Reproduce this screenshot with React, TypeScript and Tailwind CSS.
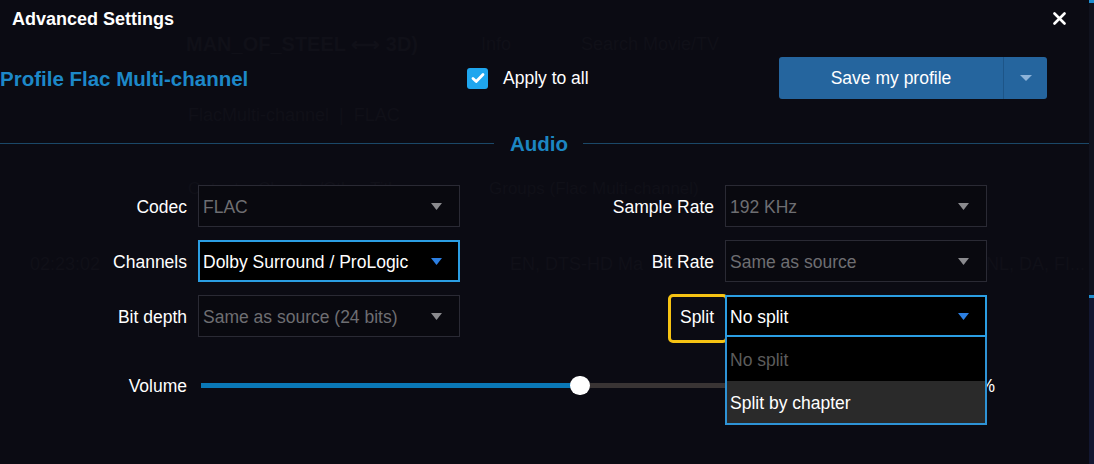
import React from "react";

function Caret({ color }: { color: string }) {
  return (
    <svg width="11" height="7" viewBox="0 0 11 7" className="shrink-0">
      <path d="M0 0h11L5.5 7z" fill={color} />
    </svg>
  );
}

function Select({ value, active = false }: { value: string; active?: boolean }) {
  return (
    <div
      className={
        active
          ? "flex h-[42px] w-[262px] items-center justify-between border-2 border-[#2b9ee3] bg-black pl-[3px] pr-[16px] text-white"
          : "flex h-[42px] w-[262px] items-center justify-between border border-[#2a2a34] bg-[#09090f] pl-[4px] pr-[17px] text-[#6e6e72]"
      }
    >
      <span className="whitespace-nowrap pt-[3px]">{value}</span>
      <Caret color={active ? "#2c7fe2" : "#8a8a8e"} />
    </div>
  );
}

function Label({ text, w }: { text: string; w: string }) {
  return <div className={`${w} shrink-0 pt-[3px] text-right text-white`}>{text}</div>;
}

export default function App() {
  return (
    <div className="relative flex h-[464px] w-[1094px] overflow-hidden bg-[#0b0b13] font-['Liberation_Sans',Arial,sans-serif] text-[17.5px] leading-none">
      {/* faint background screen behind the modal */}
      <div aria-hidden className="pointer-events-none absolute inset-0 text-[#101018]">
        <span className="absolute left-[186px] top-[34px] text-[20px] font-bold">MAN_OF_STEEL ⟷ 3D)</span>
        <span className="absolute left-[481px] top-[35px] text-[18px]">Info</span>
        <span className="absolute left-[581px] top-[35px] text-[18px]">Search Movie/TV</span>
        <span className="absolute left-[188px] top-[106px] text-[18px]">FlacMulti-channel&nbsp;&nbsp;|&nbsp;&nbsp;FLAC</span>
        <span className="absolute left-[188px] top-[180px] text-[17px]">Output&nbsp;&nbsp;&nbsp;&nbsp;Chapter/Other Titles</span>
        <span className="absolute left-[489px] top-[180px] text-[17px]">Groups (Flac Multi-channel)</span>
        <span className="absolute left-[30px] top-[255px] text-[18px]">02:23:02</span>
        <span className="absolute left-[510px] top-[255px] text-[18px]">EN, DTS-HD Ma</span>
        <span className="absolute left-[870px] top-[255px] text-[18px]">R, DE, IT, ES, NL, DA, FI...</span>
      </div>

      {/* modal */}
      <div className="relative flex w-[1089px] shrink-0 flex-col">
        {/* header */}
        <div className="flex h-[36px] items-center justify-between pl-[12px] pr-[23px]">
          <span className="pt-[2px] text-[18px] font-bold text-white">Advanced Settings</span>
          <svg width="13" height="13" viewBox="0 0 13 13">
            <path d="M1.5 1.5l10 10M11.5 1.5l-10 10" stroke="#ffffff" strokeWidth="2.6" strokeLinecap="round" />
          </svg>
        </div>

        {/* profile row */}
        <div className="mt-[21px] flex h-[42px] items-center pr-[42px]">
          <span className="w-[467px] shrink-0 pt-[2px] text-[20.5px] font-bold text-[#1d88c8]">Profile Flac Multi-channel</span>
          <div className="flex h-[21px] w-[21px] items-center justify-center rounded-[3px] bg-[#1fa6ee]">
            <svg width="14" height="12" viewBox="0 0 14 12">
              <path d="M2 6.5l3.2 3L12 2.5" stroke="#ffffff" strokeWidth="2.8" fill="none" strokeLinecap="round" strokeLinejoin="round" />
            </svg>
          </div>
          <span className="ml-[15px] pt-[2px] text-white">Apply to all</span>
          <div className="ml-auto flex h-[42px] w-[268px] overflow-hidden rounded-[3px] bg-[#25659e]">
            <div className="flex w-[224px] items-center justify-center pt-[2px] text-white">Save my profile</div>
            <div className="w-px bg-[#1d5588]" />
            <div className="flex flex-1 items-center justify-center">
              <svg width="12" height="6" viewBox="0 0 12 6">
                <path d="M0 0h12L6 6z" fill="#8db3d9" />
              </svg>
            </div>
          </div>
        </div>

        {/* section divider */}
        <div className="mt-[34px] flex h-[20px] items-center">
          <div className="h-px w-[494px] bg-[#1b4868]" />
          <span className="ml-[16px] pt-[2px] text-[20.5px] font-bold text-[#1c86c2]">Audio</span>
          <div className="ml-[15px] h-px flex-1 bg-[#1b4868]" />
        </div>

        {/* form */}
        <div className="mt-[32px] flex flex-col gap-[13px]">
          <div className="flex items-center">
            <Label text="Codec" w="w-[187px]" />
            <div className="ml-[11px]"><Select value="FLAC" /></div>
            <Label text="Sample Rate" w="w-[254px]" />
            <div className="ml-[11px]"><Select value="192 KHz" /></div>
          </div>
          <div className="flex items-center">
            <Label text="Channels" w="w-[187px]" />
            <div className="ml-[11px]"><Select value="Dolby Surround / ProLogic" active /></div>
            <Label text="Bit Rate" w="w-[254px]" />
            <div className="ml-[11px]"><Select value="Same as source" /></div>
          </div>
          <div className="relative z-10 flex h-[42px] items-center">
            <Label text="Bit depth" w="w-[187px]" />
            <div className="ml-[11px]"><Select value="Same as source (24 bits)" /></div>
            <div className="relative flex h-[42px] w-[254px] shrink-0 items-center justify-end pt-[3px] text-white">
              Split
              <div className="absolute left-[208px] top-[-1px] h-[49px] w-[60px] rounded-[5px] border-[3px] border-[#f6c313]" />
            </div>
            <div className="relative ml-[11px]">
              <Select value="No split" active />
              <div className="absolute left-0 top-full flex w-[262px] flex-col border-2 border-t-0 border-[#2e93d6]">
                <div className="flex h-[44px] items-center bg-black pl-[3px] pt-[4px] text-[#5c5c5c]">No split</div>
                <div className="flex h-[42px] items-center bg-[#2a2a2a] pl-[3px] pt-[3px] text-white">Split by chapter</div>
              </div>
            </div>
          </div>
        </div>

        {/* volume */}
        <div className="mt-[38px] flex h-[20px] items-center">
          <Label text="Volume" w="w-[187px]" />
          <div className="relative ml-[14px] flex h-[5px] w-[755px] items-center">
            <div className="h-[5px] w-[379px] bg-[#0a78b6]" />
            <div className="h-[5px] flex-1 bg-[#393434]" />
            <div className="absolute left-[369px] top-[-7px] h-[19px] w-[20px] rounded-full bg-white" />
          </div>
          <span className="ml-[4px] w-[30px] pt-[3px] text-right text-white">50%</span>
        </div>
      </div>

      {/* right edge strip */}
      <div className="flex w-[5px] flex-col bg-[#10121e]">
        <div className="h-[3px] bg-[#1e8fd2]" />
        <div className="h-[292px]" />
        <div className="h-[3px] bg-[#1e8fd2]" />
        <div className="flex-1 bg-[#121731]" />
      </div>
    </div>
  );
}
